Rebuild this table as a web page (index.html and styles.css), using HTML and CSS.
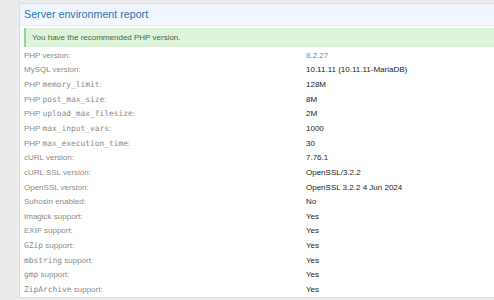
FILE: index.html
```html
<!DOCTYPE html>
<html>
<head>
<meta charset="utf-8">
<link rel="stylesheet" href="styles.css">
</head>
<body>
<div class="block">
  <div class="block-header">Server environment report</div>
  <div class="notice">You have the recommended PHP version.</div>
  <dl class="report">
    <div class="row"><dt>PHP version:</dt><dd class="link">8.2.27</dd></div>
    <div class="row"><dt>MySQL version:</dt><dd>10.11.11 (10.11.11-MariaDB)</dd></div>
    <div class="row"><dt>PHP <code>memory_limit</code>:</dt><dd>128M</dd></div>
    <div class="row"><dt>PHP <code>post_max_size</code>:</dt><dd>8M</dd></div>
    <div class="row"><dt>PHP <code>upload_max_filesize</code>:</dt><dd>2M</dd></div>
    <div class="row"><dt>PHP <code>max_input_vars</code>:</dt><dd>1000</dd></div>
    <div class="row"><dt>PHP <code>max_execution_time</code>:</dt><dd>30</dd></div>
    <div class="row"><dt>cURL version:</dt><dd>7.76.1</dd></div>
    <div class="row"><dt>cURL SSL version:</dt><dd>OpenSSL/3.2.2</dd></div>
    <div class="row"><dt>OpenSSL version:</dt><dd>OpenSSL 3.2.2 4 Jun 2024</dd></div>
    <div class="row"><dt>Suhosin enabled:</dt><dd>No</dd></div>
    <div class="row"><dt>Imagick support:</dt><dd>Yes</dd></div>
    <div class="row"><dt>EXIF support:</dt><dd>Yes</dd></div>
    <div class="row"><dt><code>GZip</code> support:</dt><dd>Yes</dd></div>
    <div class="row"><dt><code>mbstring</code> support:</dt><dd>Yes</dd></div>
    <div class="row"><dt><code>gmp</code> support:</dt><dd>Yes</dd></div>
    <div class="row"><dt><code>ZipArchive</code> support:</dt><dd>Yes</dd></div>
  </dl>
</div>
</body>
</html>
```
FILE: styles.css
```css
html, body {
  margin: 0;
  padding: 0;
  background: #ebebeb;
  font-family: "Liberation Sans", Arial, sans-serif;
  overflow: hidden;
}
body {
  padding: 3px 0 0 19px;
  height: 300px;
  box-sizing: border-box;
}
.block {
  background: #fff;
  border: 1px solid #dedede;
  border-right: none;
  height: 295px;
  box-sizing: border-box;
}
.block-header {
  height: 21px;
  padding: 0 4px;
  font-size: 10.7px;
  line-height: 21px;
  color: #2b78b4;
  background: linear-gradient(#edf4fd, #f4f8fe);
  border-bottom: 1px solid #e6edf7;
}
.notice {
  margin: 2px 0 0 4px;
  height: 19px;
  box-sizing: border-box;
  padding-left: 6px;
  border-left: 2px solid #9ccf98;
  background: #dff2dc;
  color: #3d6f3a;
  font-size: 8px;
  line-height: 19px;
}
.report {
  margin: 1.6px 0 0 4px;
  padding: 0;
}
.row {
  display: grid;
  grid-template-columns: 282px 1fr;
  height: 14.66px;
  line-height: 14.66px;
  font-size: 8px;
}
dt {
  color: #8b8b8b;
}
dd {
  margin: 0;
  color: #1c1c1c;
}
dd.link {
  color: #4a97c9;
}
code {
  font-family: "DejaVu Sans Mono", "Liberation Mono", monospace;
  font-size: 7.9px;
}
```
